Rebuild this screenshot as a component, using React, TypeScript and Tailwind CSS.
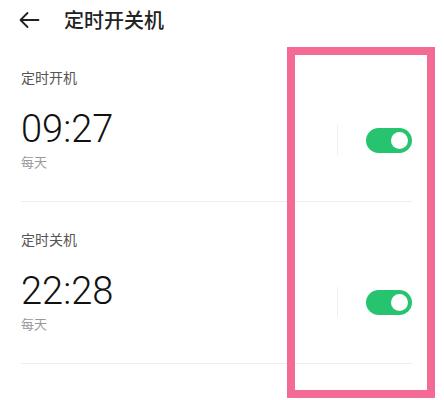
const cjk = { fontFamily: '"Noto Sans CJK SC", "Noto Sans", sans-serif' };
const num = { fontFamily: 'Roboto, "Noto Sans", sans-serif' };

interface TimerRowProps {
  label: string;
  time: string;
  repeat: string;
}

const Toggle = () => (
  <div className="relative h-[25px] w-[46px] rounded-full bg-[#27c470]">
    <div className="absolute right-[4px] top-[4px] h-[17px] w-[17px] rounded-full bg-white" />
  </div>
);

const TimerRow = ({ label, time, repeat }: TimerRowProps) => (
  <div className="border-b border-[#eeeeee] pt-[27px] pb-[30px]">
    <div className="text-[14px] leading-[20px] text-[#555555]" style={cjk}>
      {label}
    </div>
    <div className="mt-[20px] flex items-start justify-between">
      <div className="flex flex-col">
        <div className="text-[38px] leading-[45px] font-light text-[#111111]" style={num}>
          {time}
        </div>
        <div className="text-[13px] leading-[19px] text-[#999999]" style={cjk}>
          {repeat}
        </div>
      </div>
      <div className="mt-[18px] flex items-center gap-[28px]">
        <div className="h-[30px] w-px bg-[#eeeeee]" />
        <Toggle />
      </div>
    </div>
  </div>
);

export default function App() {
  return (
    <div className="relative h-[400px] w-[444px] overflow-hidden bg-white">
      {/* Header */}
      <div className="flex h-[40px] items-center pl-[19px]">
        <svg width="21" height="18" viewBox="0 0 21 18" fill="none" stroke="#222" strokeWidth={1.8} strokeLinecap="round" strokeLinejoin="round">
          <path d="M1.5 9h18M8.5 2L1.5 9l7 7" />
        </svg>
        <div className="ml-[24px] text-[20px] font-medium leading-[28px] text-[#222222]" style={cjk}>
          定时开关机
        </div>
      </div>

      {/* Timers */}
      <div className="pl-[21px] pr-[32px]">
        <TimerRow label="定时开机" time="09:27" repeat="每天" />
        <TimerRow label="定时关机" time="22:28" repeat="每天" />
      </div>

      {/* Highlight annotation */}
      <div className="absolute left-[287px] top-[47px] h-[351px] w-[148px] border-[8px] border-[#f36b95]" />
    </div>
  );
}
